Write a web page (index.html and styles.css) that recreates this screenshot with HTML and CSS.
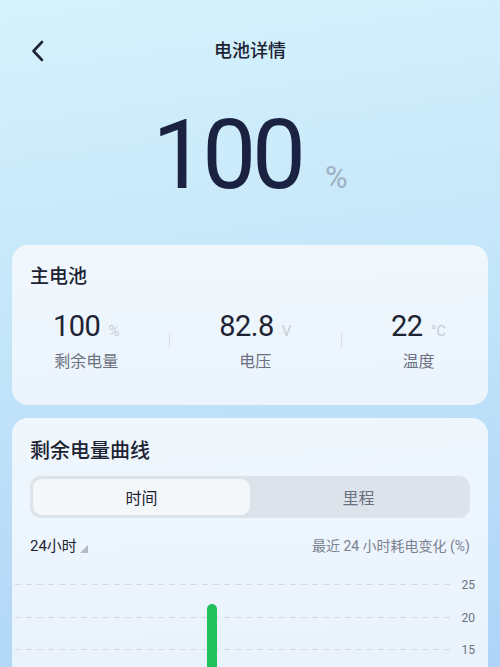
FILE: index.html
```html
<!DOCTYPE html>
<html lang="zh-CN">
<head>
<meta charset="utf-8">
<meta name="viewport" content="width=device-width,initial-scale=1">
<title>电池详情</title>
<link rel="stylesheet" href="styles.css">
</head>
<body>
    <div class="header">
        <a class="back" href="#">
            <svg width="16" height="22" viewBox="0 0 16 22"><path d="M12 2 L3.5 11 L12 20" fill="none" stroke="#1d2333" stroke-width="2.6" stroke-linecap="round" stroke-linejoin="round"/></svg>
        </a>
        <div class="title">电池详情</div>
    </div>

    <div class="big">
        <span class="big-num">100</span><span class="big-unit">%</span>
    </div>

    <div class="card main-card">
        <div class="card-title">主电池</div>
        <div class="stats">
            <div class="stat">
                <div class="val">100<span class="unit">%</span></div>
                <div class="label">剩余电量</div>
            </div>
            <div class="sep"><i></i></div>
            <div class="stat">
                <div class="val">82.8<span class="unit">V</span></div>
                <div class="label">电压</div>
            </div>
            <div class="sep"><i></i></div>
            <div class="stat">
                <div class="val">22<span class="unit">°C</span></div>
                <div class="label">温度</div>
            </div>
        </div>
    </div>

    <div class="card curve-card">
        <div class="card-title">剩余电量曲线</div>
        <div class="tabs">
            <div class="tab active">时间</div>
            <div class="tab">里程</div>
        </div>
        <div class="chart-head">
            <div class="range">24小时<span class="tri"></span></div>
            <div class="note">最近 24 小时耗电变化 (%)</div>
        </div>
        <svg class="chart" width="470" height="111" viewBox="0 0 470 111">
            <g stroke="#d3dae3" stroke-width="1" stroke-dasharray="6 5">
                <line x1="0" y1="28.5" x2="440" y2="28.5"/>
                <line x1="0" y1="61.5" x2="440" y2="61.5"/>
                <line x1="0" y1="93.5" x2="440" y2="93.5"/>
            </g>
            <g class="axis" text-anchor="end">
                <text x="460" y="33">25</text>
                <text x="460" y="66">20</text>
                <text x="460" y="98">15</text>
            </g>
            <rect x="192" y="48" width="10" height="80" rx="5" fill="#22c05a"/>
        </svg>
    </div>
</body>
</html>
```

FILE: styles.css
```css
body {
    margin: 0;
    height: 667px;
    overflow: hidden;
    font-family: Roboto, "Noto Sans CJK SC", sans-serif;
    color: #1d2333;
    background: linear-gradient(172deg, #d6f2fc 0%, #c4e6fa 45%, #aed4f7 100%);
}
.header {
    display: flex;
    align-items: center;
    justify-content: center;
    height: 40px;
    padding-top: 31px;
    position: relative;
}
.back {
    position: absolute;
    left: 30px;
    top: 40px;
    display: flex;
}
.title {
    font-size: 18px;
    font-weight: 500;
    line-height: 40px;
}
.big {
    display: flex;
    justify-content: center;
    align-items: baseline;
    margin-top: 25px;
    height: 118px;
}
.big-num {
    font-size: 96px;
    font-weight: 400;
    letter-spacing: -4px;
    line-height: 118px;
    color: #1b2140;
}
.big-unit {
    font-size: 31px;
    color: #9db0c2;
    margin-left: 23px;
}
.card {
    margin: 0 12px;
    border-radius: 16px;
    background: linear-gradient(180deg, rgba(246,250,254,0.88), rgba(240,246,253,0.9));
    padding: 20px 18px 0 18px;
}
.main-card {
    margin-top: 31px;
    height: 140px;
}
.card-title {
    font-size: 19px;
    font-weight: 500;
    line-height: 24px;
}
.stats {
    display: grid;
    grid-template-columns: auto 1fr auto 1fr auto;
    margin: 20px 24px 0 23px;
}
.stat {
    display: flex;
    flex-direction: column;
    align-items: center;
}
.val {
    font-size: 29px;
    line-height: 34px;
    letter-spacing: -0.5px;
}
.unit {
    font-size: 15px;
    color: #c6cdd7;
    margin-left: 8px;
    letter-spacing: 0;
}
.label {
    margin-top: 3px;
    font-size: 16px;
    line-height: 22px;
    color: #6b7180;
}
.sep {
    display: flex;
    justify-content: center;
    padding-top: 24px;
}
.sep i {
    display: block;
    width: 1px;
    height: 15px;
    background: #d8dee6;
}
.curve-card {
    margin-top: 13px;
    height: 229px;
    overflow: hidden;
    border-radius: 16px 16px 0 0;
}
.curve-card .card-title {
    font-size: 20px;
    line-height: 26px;
}
.tabs {
    display: flex;
    margin-top: 12px;
    height: 42px;
    padding: 3px;
    box-sizing: border-box;
    background: #dce3ea;
    border-radius: 11px;
}
.tab {
    flex: 1;
    display: flex;
    align-items: center;
    justify-content: center;
    font-size: 16px;
    color: #6b7180;
    border-radius: 9px;
}
.tab.active {
    background: #f4f7fa;
    color: #1d2333;
}
.chart-head {
    display: flex;
    justify-content: space-between;
    align-items: center;
    margin-top: 18px;
    line-height: 20px;
}
.range {
    font-size: 15px;
    display: flex;
    align-items: center;
}
.tri {
    width: 0;
    height: 0;
    margin: 6px 0 0 3px;
    border-left: 8px solid transparent;
    border-bottom: 8px solid #b4bac4;
}
.note {
    font-size: 14px;
    color: #7a8190;
}
.chart {
    display: block;
    margin: 0 -15px;
}
.axis text {
    font-size: 12px;
    fill: #6b7180;
    font-family: Roboto, sans-serif;
}
```
